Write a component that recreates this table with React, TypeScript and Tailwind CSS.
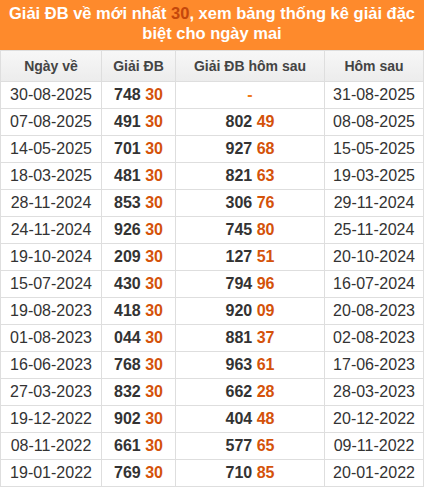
import React from 'react';

const rows: [string, string, string, string, string, string][] = [
  ['30-08-2025', '748', '30', '', '', '31-08-2025'],
  ['07-08-2025', '491', '30', '802', '49', '08-08-2025'],
  ['14-05-2025', '701', '30', '927', '68', '15-05-2025'],
  ['18-03-2025', '481', '30', '821', '63', '19-03-2025'],
  ['28-11-2024', '853', '30', '306', '76', '29-11-2024'],
  ['24-11-2024', '926', '30', '745', '80', '25-11-2024'],
  ['19-10-2024', '209', '30', '127', '51', '20-10-2024'],
  ['15-07-2024', '430', '30', '794', '96', '16-07-2024'],
  ['19-08-2023', '418', '30', '920', '09', '20-08-2023'],
  ['01-08-2023', '044', '30', '881', '37', '02-08-2023'],
  ['16-06-2023', '768', '30', '963', '61', '17-06-2023'],
  ['27-03-2023', '832', '30', '662', '28', '28-03-2023'],
  ['19-12-2022', '902', '30', '404', '48', '20-12-2022'],
  ['08-11-2022', '661', '30', '577', '65', '09-11-2022'],
  ['19-01-2022', '769', '30', '710', '85', '20-01-2022'],
];

export default function App() {
  return (
    <div className="w-[424px] bg-white font-['Liberation_Sans',Arial,sans-serif]">
      {/* Title */}
      <div className="bg-[#fe8a2c] h-[50px] px-[4px] pt-[3px] text-center text-white text-[16.5px] font-bold leading-[20px]">
        Giải ĐB về mới nhất <span className="text-[#c4470b]">30</span>, xem bảng thống kê giải đặc biệt cho ngày mai
      </div>

      <table className="w-[423px] border-collapse table-fixed">
        <colgroup>
          <col className="w-[101px]" />
          <col className="w-[74px]" />
          <col className="w-[149px]" />
          <col className="w-[99px]" />
        </colgroup>
        <thead>
          <tr className="h-[31px] bg-gradient-to-b from-[#f7f7f7] to-[#ececec] text-[14px] font-bold text-[#444]">
            <th className="border border-[#dedede] font-bold">Ngày về</th>
            <th className="border border-[#dedede] font-bold">Giải ĐB</th>
            <th className="border border-[#dedede] font-bold">Giải ĐB hôm sau</th>
            <th className="border border-[#dedede] font-bold">Hôm sau</th>
          </tr>
        </thead>
        <tbody>
          {rows.map((r) => (
            <tr key={r[0]} className="h-[27px] text-[16px] text-[#333]">
              <td className="border border-[#dedede] text-center">{r[0]}</td>
              <td className="border border-[#dedede] text-center font-bold">
                {r[1]} <span className="text-[#d4520a]">{r[2]}</span>
              </td>
              <td className="border border-[#dedede] text-center font-bold">
                {r[3] ? (
                  <>
                    {r[3]} <span className="text-[#d4520a]">{r[4]}</span>
                  </>
                ) : (
                  <span className="text-[#f07a1a]">-</span>
                )}
              </td>
              <td className="border border-[#dedede] text-center">{r[5]}</td>
            </tr>
          ))}
        </tbody>
      </table>
    </div>
  );
}
